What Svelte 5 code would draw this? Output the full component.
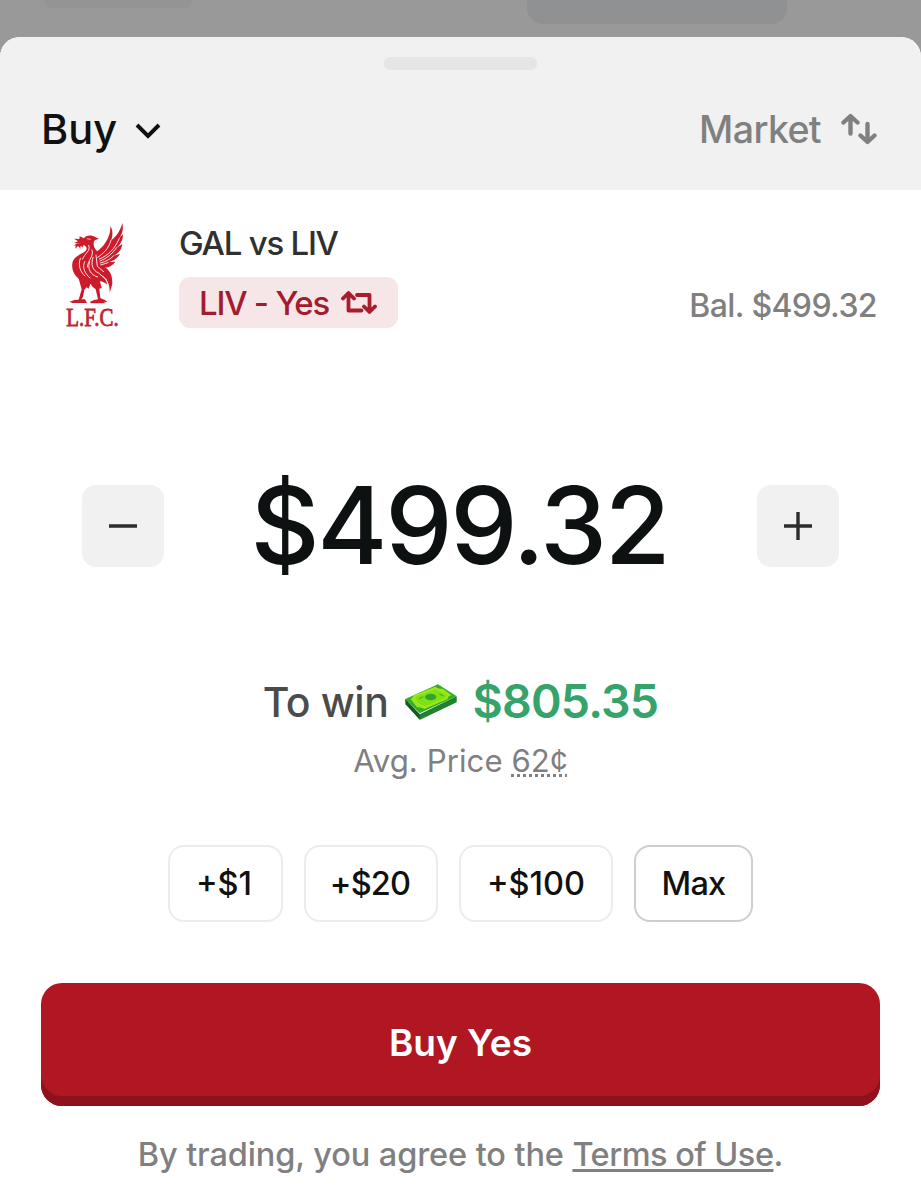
<script lang="ts">
  const balance = 499.32;
  const payout = '805.35';
  const avgPrice = 62;
  const increments = [1, 20, 100];

  let amount = $state(balance);

  let isMax = $derived(amount >= balance);

  function add(step: number) {
    amount = Math.max(0, Math.min(balance, amount + step));
  }
</script>

<div class="screen">
  <div class="backdrop">
    <span class="ghost small"></span>
    <span class="ghost large"></span>
  </div>

  <section class="sheet">
    <header>
      <div class="handle"></div>
      <div class="header-row">
        <button type="button" class="side">
          <span class="buy">Buy</span>
          <svg width="26" height="18" viewBox="0 0 26 18" fill="none">
            <path d="M2 3 13 14 24 3" stroke="#111" stroke-width="3.9" />
          </svg>
        </button>
        <button type="button" class="order-type">
          <span class="market">Market</span>
          <svg width="36" height="32" viewBox="0 0 36 32" fill="none">
            <g stroke="#808080" stroke-width="4.4" stroke-linecap="round" stroke-linejoin="round">
              <path d="M9.500 20.500V3.500M2.500 9.500 9.500 3 16.500 9.500" />
              <path d="M26.500 11V28.500M19.500 22.500 26.500 29 33.500 22.500" />
            </g>
          </svg>
        </button>
      </div>
    </header>

    <div class="match">
      <svg class="crest" width="90" height="130" viewBox="0 0 270 390">
        <g fill="#cc1c2c">
          <path d="M102 85C108 74 126 74 137 82L147 86 134 91C128 101 131 111 139 121C151 137 150 160 151 180C153 201 145 216 130 222L111 222 91 209C74 198 64 180 67 160C69 145 83 137 96 130C108 123 113 117 108 110C103 104 96 101 91 101L72 99 84 94 72 86 88 87 89 79Z" />
          <path d="M89 100 102 103 98 111 91 108 92 116 84 108 76 116 77 106 71 107 79 101Z" />
          <path d="M137 128C146 119 158 113 167 97C177 81 182 66 181 48C190 61 188 80 183 91C198 81 211 63 217 39C221 57 217 73 207 85L219 73C219 92 210 105 199 114L217 102C214 121 204 131 190 138L210 131C202 147 188 154 174 157L196 155C187 169 168 176 150 172L143 151Z" />
          <path d="M148 165 168 174C182 184 188 201 187 222L179 248C180 226 173 209 159 199L139 190Z" />
          <path d="M134 190C154 193 167 203 172 223C158 213 143 211 129 213Z" />
          <path d="M84 199 105 215 121 222 116 236 110 232 103 239 99 261 94 268H105L111 279H67L59 275 73 270 86 269 95 238 93 231Z" />
          <path d="M121 218 148 207 155 234 148 236 151 264 166 271 173 277 162 275 166 280H124L119 276 132 270 144 268 137 238 126 229Z" />
        </g>
        <g fill="none" stroke="#fff" stroke-width="2.600" stroke-linecap="round">
          <path d="M143 142C160 131 176 116 183 91" />
          <path d="M148 147C174 136 193 120 208 85" />
          <path d="M150 153C172 145 187 131 200 113" />
          <path d="M151 159C168 155 180 148 190 138" />
          <path d="M152 165 174 158" />
          <path d="M116 106C124 123 103 130 98 147" />
          <path d="M126 120C133 138 113 151 112 171" />
          <path d="M91 145C83 165 91 187 105 198" />
          <path d="M104 155C95 174 106 192 120 204" />
          <path d="M119 155C111 177 121 194 143 201" />
          <path d="M129 142C122 164 127 181 146 189L170 210" />
          <path d="M138 135 142 169 161 185" />
          <path d="M112 86 121 88" stroke-width="2" />
        </g>
        <text class="crest-name" x="49" y="347" textLength="157" lengthAdjust="spacingAndGlyphs">L.F.C.</text>
      </svg>
      <div class="match-info">
        <div class="title">GAL vs LIV</div>
        <button type="button" class="outcome">
          <span>LIV - Yes</span>
          <svg width="36" height="24" viewBox="0 0 36 24" fill="none">
            <g stroke="#aa1b2b" stroke-width="3.800" stroke-linecap="round" stroke-linejoin="round">
              <path d="M2 7.500 7.500 2 13 7.500M7.500 2.500V19.500H20.500" />
              <path d="M16 4H28.500V20.500M23 15.500 28.500 21 34 15.500" />
            </g>
          </svg>
        </button>
      </div>
      <div class="balance">Bal. ${balance}</div>
    </div>

    <div class="amount-row">
      <button type="button" class="step" aria-label="Decrease" onclick={() => add(-1)}>
        <svg width="28" height="28" viewBox="0 0 28 28">
          <path d="M0 14H28" stroke="#2b2d2f" stroke-width="3.500" />
        </svg>
      </button>
      <div class="amount">${amount.toFixed(2)}</div>
      <button type="button" class="step" aria-label="Increase" onclick={() => add(1)}>
        <svg width="28" height="28" viewBox="0 0 28 28">
          <path d="M0 14H28M14 0V28" stroke="#2b2d2f" stroke-width="3.400" />
        </svg>
      </button>
    </div>

    <div class="win-row">
      <span class="to-win">To win</span>
      <svg width="52" height="36" viewBox="0 0 156 108">
        <path d="M1 45 44 91 155 37V55L45 107 2 61Z" fill="#1d7f2c" />
        <path d="M1 45 44 91V107L2 61Z" fill="#145d21" />
        <path d="M44 97 155 45M44 102 155 50" stroke="#2c8f35" stroke-width="1.500" />
        <path d="M1 45 99 1 155 37 44 88Z" fill="#36ad28" />
        <path d="M17 45C24 42 25 37 26 34L91 8C97 13 106 14 113 14L140 34C129 36 128 43 128 45L58 75C51 70 42 70 36 70Z" fill="#98e817" />
        <path d="M31 45 35 37 92 16 102 21 124 35 118 42 61 66 45 60Z" fill="#7fe016" />
        <path d="M42 44 55 38M103 30 116 36" stroke="#35ac29" stroke-width="3" />
        <ellipse cx="77" cy="39" rx="17" ry="10" fill="#2fa52b" />
      </svg>
      <span class="payout">${payout}</span>
    </div>

    <div class="avg">Avg. Price <span>{avgPrice}¢</span></div>

    <div class="chips">
      {#each increments as step}
        <button type="button" class="chip chip-{step}" onclick={() => add(step)}>+${step}</button>
      {/each}
      <button type="button" class="chip max" class:active={isMax} onclick={() => (amount = balance)}>
        Max
      </button>
    </div>

    <button type="button" class="submit">Buy Yes</button>

    <p class="terms">By trading, you agree to the <span>Terms of Use</span>.</p>
  </section>
</div>

<style>
  :global(body) {
    margin: 0;
    background: #fff;
  }

  .screen {
    width: 921px;
    height: 1200px;
    overflow: hidden;
    background: #999;
    font-family: Inter, sans-serif;
    font-weight: 500;
  }

  button {
    padding: 0;
    border: 0;
    background: none;
    color: inherit;
    font: inherit;
    letter-spacing: inherit;
    cursor: pointer;
  }

  svg {
    display: block;
    flex: none;
  }

  .backdrop {
    display: flex;
    align-items: flex-start;
    height: 37px;
    padding-left: 44px;
  }

  .ghost {
    background: #939495;
  }

  .ghost.small {
    width: 148px;
    height: 8px;
    border-radius: 0 0 8px 8px;
  }

  .ghost.large {
    width: 260px;
    height: 24px;
    margin-left: 335px;
    border-radius: 0 0 16px 16px;
    background: #8f9193;
  }

  .sheet {
    height: 1163px;
    border-radius: 20px 20px 0 0;
    overflow: hidden;
    background: #fff;
  }

  header {
    box-sizing: border-box;
    height: 153px;
    padding-top: 20px;
    background: #f1f1f1;
  }

  .handle {
    width: 153px;
    height: 13px;
    margin: 0 auto;
    border-radius: 6px;
    background: #e5e5e5;
  }

  .header-row {
    display: flex;
    justify-content: space-between;
    align-items: center;
    height: 60px;
    margin-top: 29px;
    padding: 0 44px 0 41px;
  }

  .side,
  .order-type {
    display: flex;
    align-items: center;
  }

  .side {
    gap: 18px;
  }

  .side svg {
    margin-top: 4px;
  }

  .order-type {
    gap: 20px;
  }

  .buy {
    font-size: 41.5px;
    color: #111;
  }

  .market {
    font-size: 37.5px;
    letter-spacing: -0.6px;
    color: #808080;
  }

  .match {
    display: flex;
    height: 150px;
    padding: 20px 44px 0 50px;
  }

  .crest-name {
    font-family: 'Liberation Serif', serif;
    font-size: 74px;
    fill: #bd2635;
    stroke: #bd2635;
    stroke-width: 2.5px;
  }

  .match-info {
    margin-left: 39px;
    padding-top: 13px;
  }

  .title {
    height: 40px;
    font-size: 33px;
    letter-spacing: -1.25px;
    line-height: 40px;
    color: #303030;
  }

  .outcome {
    display: flex;
    align-items: center;
    gap: 12px;
    box-sizing: border-box;
    width: 219px;
    height: 51px;
    margin-top: 14px;
    padding-left: 20px;
    border-radius: 11px;
    background: #f7e6e8;
    color: #a11d2e;
    font-size: 33px;
    letter-spacing: -1.25px;
  }

  .balance {
    margin-left: auto;
    padding-top: 76px;
    font-size: 32px;
    letter-spacing: -0.6px;
    line-height: 40px;
    color: #808080;
  }

  .amount-row {
    display: flex;
    justify-content: space-between;
    align-items: center;
    height: 82px;
    margin-top: 125px;
    padding: 0 82px;
  }

  .step {
    display: grid;
    place-items: center;
    width: 82px;
    height: 82px;
    border-radius: 14px;
    background: #f1f1f1;
  }

  .amount {
    margin: -2px 2px 0 0;
    font-size: 107px;
    font-weight: 550;
    letter-spacing: -2.3px;
    line-height: 82px;
    color: #0e1111;
  }

  .win-row {
    display: flex;
    justify-content: center;
    align-items: center;
    gap: 16px;
    height: 60px;
    margin-top: 105px;
  }

  .to-win {
    font-size: 41px;
    letter-spacing: -0.4px;
    color: #4b4b4b;
  }

  .payout {
    margin-top: -2px;
    font-size: 46.5px;
    font-weight: 600;
    letter-spacing: -0.8px;
    color: #35a36a;
  }

  .avg {
    margin-top: 9px;
    text-align: center;
    font-size: 31.2px;
    font-weight: 400;
    letter-spacing: 0.05px;
    line-height: 40px;
    color: #808080;
  }

  .avg span {
    text-decoration: underline dotted 2.500px;
    text-underline-offset: 2px;
    text-decoration-skip-ink: none;
  }

  .chips {
    display: flex;
    justify-content: center;
    gap: 21px;
    margin-top: 64px;
  }

  .chip {
    box-sizing: border-box;
    height: 77px;
    border: 2.500px solid #ececec;
    border-radius: 16px;
    color: #111;
    font-size: 32.500px;
  }

  .chip-1 {
    width: 115px;
    padding-right: 3px;
  }

  .chip-20 {
    width: 134px;
    padding-right: 2px;
    letter-spacing: -0.8px;
  }

  .chip-100 {
    width: 154px;
  }

  .max {
    width: 119px;
    letter-spacing: -0.8px;
  }

  .max.active {
    border-color: #cdcfcf;
  }

  .submit {
    display: block;
    width: 839px;
    height: 123px;
    margin: 61px auto 0;
    padding-bottom: 4px;
    border-radius: 21px;
    background: #b01722;
    box-shadow: inset 0 -10px 0 #8f111c;
    color: #fff;
    font-size: 37px;
    font-weight: 600;
  }

  .terms {
    margin: 29px 0 0;
    text-align: center;
    font-size: 32.500px;
    letter-spacing: -0.1px;
    line-height: 40px;
    color: #808080;
  }

  .terms span {
    letter-spacing: -0.5px;
    text-decoration: underline 2.500px;
    text-underline-offset: 3px;
    text-decoration-skip-ink: none;
  }
</style>
